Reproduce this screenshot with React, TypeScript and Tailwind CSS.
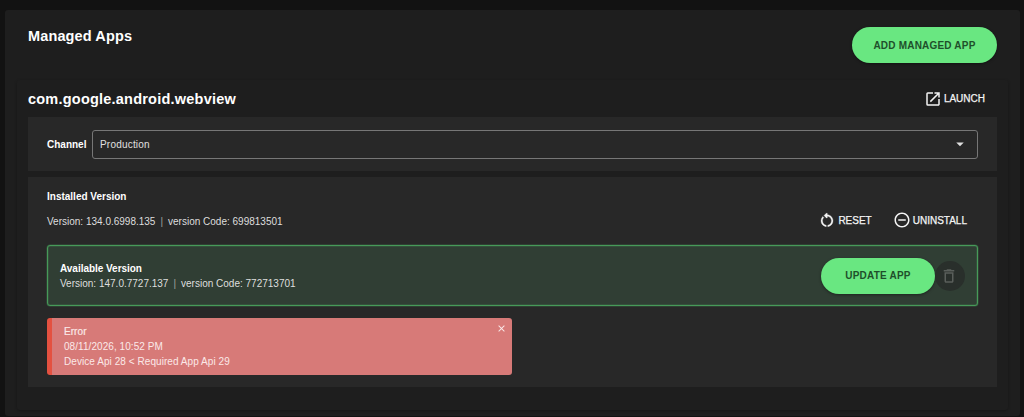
import type { ReactNode } from "react";
import {
  MdArrowDropDown,
  MdClose,
  MdDeleteOutline,
  MdLaunch,
  MdRemoveCircleOutline,
} from "react-icons/md";

const APP = {
  packageName: "com.google.android.webview",
  channel: "Production",
  installed: { version: "134.0.6998.135", code: "699813501" },
  available: { version: "147.0.7727.137", code: "772713701" },
};

function ResetIcon({ className }: { className?: string }) {
  return (
    <svg className={className} viewBox="0 0 24 24" fill="currentColor" stroke="currentColor" strokeWidth={0.4}>
      <path d="M6 13c0-1.65.67-3.15 1.76-4.24L6.34 7.34A8.014 8.014 0 0 0 4 13c0 4.08 3.05 7.44 7 7.93v-2.02c-2.83-.48-5-2.94-5-5.91zM20 13c0-4.42-3.58-8-8-8-.06 0-.12.01-.18.01l1.09-1.09L11.5 2.5 8 6l3.5 3.5 1.41-1.41-1.08-1.08c.06 0 .12-.01.17-.01 3.31 0 6 2.69 6 6 0 2.97-2.17 5.43-5 5.91v2.02c3.95-.49 7-3.85 7-7.93z" />
    </svg>
  );
}

function TextButton({ icon, children }: { icon: ReactNode; children: ReactNode }) {
  return (
    <button className="flex h-6 items-center gap-0.5 text-[10px] text-[#f4f4f4] [-webkit-text-stroke:0.25px_#f4f4f4]">
      {icon}
      {children}
    </button>
  );
}

function PillButton({ className, children }: { className: string; children: ReactNode }) {
  return (
    <button
      className={`h-9 rounded-full bg-[#69e781] text-[10px] font-bold tracking-[0.2px] text-[#1f4f2b] shadow-[0_1px_3px_rgba(0,0,0,0.4)] ${className}`}
    >
      {children}
    </button>
  );
}

function VersionLine({ version, code }: { version: string; code: string }) {
  return (
    <p className="text-[10px] leading-[15px] text-[#dedede]">
      Version: {version}
      <span className="mx-[5px] text-[#a0a0a0]">|</span>
      version Code: {code}
    </p>
  );
}

export default function App() {
  return (
    <main className="h-[417px] overflow-hidden bg-[#121212] pt-[10px] pr-1 pl-[5px] font-['Liberation_Sans',Arial,sans-serif] text-white">
      <section className="h-[406px] rounded-[3px] bg-[#1e1e1e] px-3 pt-[17px]">
        <header className="flex h-[53px] items-start justify-between pr-[11px] pl-[11px]">
          <h1 className="text-[14.5px] leading-[19px] font-bold tracking-[0.13px]">Managed Apps</h1>
          <PillButton className="w-[145px]">ADD MANAGED APP</PillButton>
        </header>

        {/* Managed app card */}
        <article className="h-[330px] rounded-[3px] pr-[11px] pl-[11px] shadow-[0_1px_3px_rgba(0,0,0,0.3)]">
          <div className="flex h-[37px] items-center justify-between pr-3">
            <h2 className="pt-0.5 text-[14.5px] font-bold tracking-[0.22px]">{APP.packageName}</h2>
            <TextButton icon={<MdLaunch className="size-[18px]" />}>LAUNCH</TextButton>
          </div>

          <div className="flex h-[54px] items-center gap-[5px] bg-[#282828] pr-[19px] pl-[19px]">
            <span className="w-10 text-[10px] font-bold">Channel</span>
            <button className="flex h-[29px] flex-1 items-center justify-between rounded-[3px] border border-[#777] pr-2 pl-[7px] text-[10px] tracking-[0.2px] text-[#e0e0e0]">
              {APP.channel}
              <MdArrowDropDown className="size-[18px]" />
            </button>
          </div>

          <div className="mt-[6px] h-[210px] bg-[#282828] px-[19px] pt-[13px]">
            <h3 className="text-[10px] leading-[14px] font-bold">Installed Version</h3>
            <div className="mt-1 flex h-6 items-center justify-between pr-[11px]">
              <div className="pt-0.5">
                <VersionLine {...APP.installed} />
              </div>
              <div className="flex gap-[21px]">
                <TextButton icon={<ResetIcon className="size-[18px]" />}>RESET</TextButton>
                <TextButton icon={<MdRemoveCircleOutline className="size-[18px]" />}>UNINSTALL</TextButton>
              </div>
            </div>

            <div className="mt-[13px] flex h-[61px] items-center justify-between rounded-[3px] border border-[#479a59] bg-[#303e34] pr-3 pl-3 shadow-[0_0_0_0.5px_#479a5966,inset_0_0_0_0.5px_#479a5966]">
              <div className="pt-px">
                <h3 className="text-[10px] leading-[14px] font-bold tracking-[-0.03px]">Available Version</h3>
                <VersionLine {...APP.available} />
              </div>
              <div className="flex items-center">
                <PillButton className="w-[114px]">UPDATE APP</PillButton>
                <button
                  className="flex size-[30px] items-center justify-center rounded-full bg-[#292f2b] pr-0.5 text-[#5a5f5b]"
                  disabled
                >
                  <MdDeleteOutline className="size-[18px]" />
                </button>
              </div>
            </div>

            <div
              role="alert"
              className="mt-3 flex h-[57px] w-[465px] justify-between rounded-[3px] border-l-[5px] border-[#e45140] bg-[#d77a78] pt-[6px] pr-[5px] pl-3 text-[10px] leading-[15px] tracking-[0.06px] text-[#fbe9e8]"
            >
              <div>
                <p className="[-webkit-text-stroke:0.2px_#fbe9e8]">Error</p>
                <p>08/11/2026, 10:52 PM</p>
                <p>Device Api 28 &lt; Required App Api 29</p>
              </div>
              <MdClose className="-mt-px size-[11px]" />
            </div>
          </div>
        </article>
      </section>
    </main>
  );
}
